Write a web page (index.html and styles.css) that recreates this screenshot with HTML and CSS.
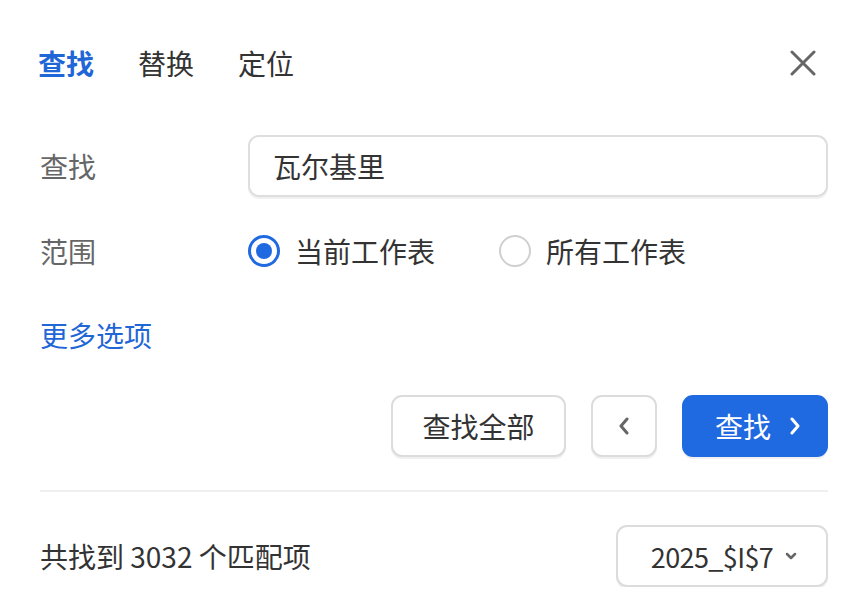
FILE: index.html
```html
<!DOCTYPE html>
<html lang="zh-CN">
<head>
<meta charset="utf-8">
<title>查找</title>
<link rel="stylesheet" href="styles.css">
</head>
<body>
<div class="panel">
  <div class="tabs">
    <div class="tab-list">
      <span class="tab active">查找</span>
      <span class="tab">替换</span>
      <span class="tab">定位</span>
    </div>
    <button class="close" aria-label="关闭">
      <svg width="26" height="26" viewBox="0 0 26 26"><path d="M2 2 L24 24 M24 2 L2 24" stroke="#666" stroke-width="3" stroke-linecap="round" fill="none"/></svg>
    </button>
  </div>

  <div class="form">
    <div class="label">查找</div>
    <div class="input">瓦尔基里</div>

    <div class="label">范围</div>
    <div class="radios">
      <label class="radio"><span class="dot checked"></span>当前工作表</label>
      <label class="radio"><span class="dot"></span>所有工作表</label>
    </div>
  </div>

  <a class="more">更多选项</a>

  <div class="actions">
    <button class="btn">查找全部</button>
    <button class="btn icon-btn" aria-label="上一个">
      <svg width="12" height="18" viewBox="0 0 12 18"><path d="M9 2 L3 9 L9 16" stroke="#666" stroke-width="3" stroke-linecap="round" stroke-linejoin="round" fill="none"/></svg>
    </button>
    <button class="btn primary">查找
      <svg width="12" height="18" viewBox="0 0 12 18"><path d="M3 2 L9 9 L3 16" stroke="#fff" stroke-width="3" stroke-linecap="round" stroke-linejoin="round" fill="none"/></svg>
    </button>
  </div>

  <div class="divider"></div>

  <div class="footer">
    <span class="count">共找到 3032 个匹配项</span>
    <button class="btn select"><span class="sel-text">2025_$I$7</span>
      <svg width="12" height="8" viewBox="0 0 12 8"><path d="M2 2 L6 6 L10 2" stroke="#666" stroke-width="2.5" stroke-linecap="round" stroke-linejoin="round" fill="none"/></svg>
    </button>
  </div>
</div>
</body>
</html>
```

FILE: styles.css
```css
* { box-sizing: border-box; }
html, body { margin: 0; background: #fff; }
body {
  font-family: "Noto Sans CJK SC", "Noto Sans", sans-serif;
  font-size: 28px;
  color: #333;
}
.panel {
  width: 847px;
  padding: 43px 19px 0 40px;
}
.tabs {
  display: flex;
  align-items: center;
  justify-content: space-between;
  height: 40px;
}
.tab-list {
  display: flex;
  gap: 44px;
  margin-left: -2px;
}
.tab {
  line-height: 40px;
  color: #333;
}
.tab.active {
  color: #1f66d6;
  font-weight: 700;
}
.close {
  border: 0;
  background: none;
  padding: 0;
  margin-right: 12px;
  display: flex;
}
.form {
  display: grid;
  grid-template-columns: 208px 1fr;
  align-items: center;
  row-gap: 34px;
  margin-top: 52px;
}
.label {
  color: #666;
  line-height: 40px;
}
.input {
  height: 62px;
  border: 2px solid #dedede;
  border-radius: 11px;
  box-shadow: 0 2px 0 rgba(0,0,0,0.06);
  padding: 0 23px;
  display: flex;
  align-items: center;
  color: #333;
}
.radios {
  display: flex;
  gap: 64px;
  height: 40px;
  align-items: center;
}
.radio {
  display: flex;
  align-items: center;
  gap: 15px;
}
.dot {
  width: 32px;
  height: 32px;
  border-radius: 50%;
  border: 2px solid #cfcfcf;
  display: inline-flex;
  align-items: center;
  justify-content: center;
}
.dot.checked {
  border: 3px solid #1f6ae0;
}
.dot.checked::after {
  content: "";
  width: 16px;
  height: 16px;
  border-radius: 50%;
  background: #1f6ae0;
}
.more {
  display: block;
  color: #1f66d6;
  line-height: 40px;
  margin-top: 44px;
}
.actions {
  display: flex;
  justify-content: flex-end;
  gap: 25px;
  margin-top: 40px;
}
.btn {
  font: inherit;
  color: #333;
  height: 62px;
  border: 2px solid #dcdcdc;
  border-radius: 11px;
  background: #fff;
  box-shadow: 0 2px 0 rgba(0,0,0,0.06);
  display: inline-flex;
  align-items: center;
  justify-content: center;
  padding: 0;
}
.btn:first-child { width: 175px; }
.icon-btn { width: 66px; }
.primary {
  width: 146px;
  background: #1f6ae0;
  border-color: #1f6ae0;
  color: #fff;
  gap: 18px;
  padding-left: 6px;
}
.divider {
  height: 2px;
  background: #efefef;
  margin-top: 33px;
}
.footer {
  display: flex;
  justify-content: space-between;
  align-items: center;
  margin-top: 33px;
}
.count { color: #333; }
.select {
  width: 212px;
  gap: 12px;
  padding-left: 4px;
}
.sel-text {
  font-size: 27px;
  letter-spacing: -0.6px;
}
```
